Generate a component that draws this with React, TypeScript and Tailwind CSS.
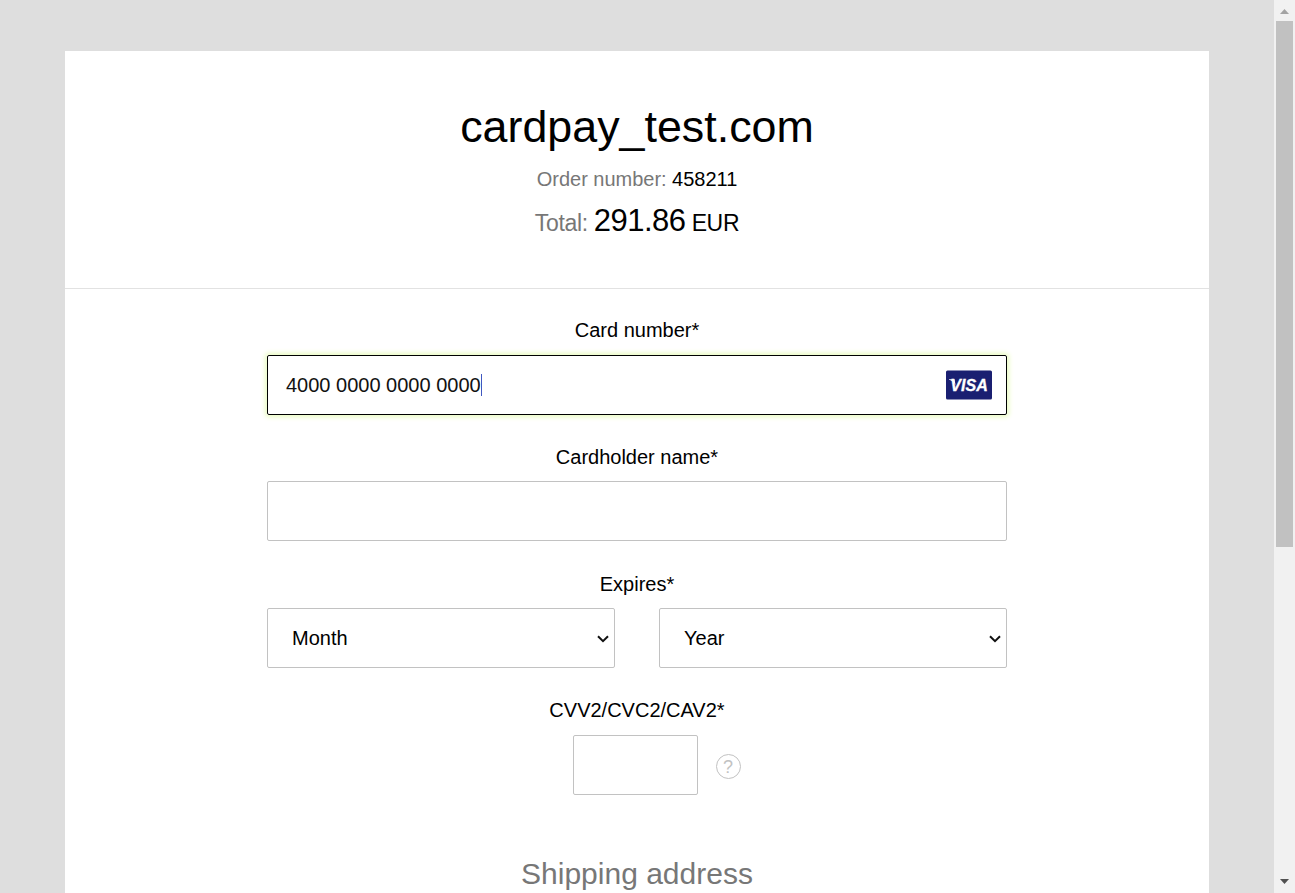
import React from "react";

const label = "flex h-6 items-center justify-center text-[20px] leading-6";
const box = "h-[60px] rounded-[2px] border border-[#c2c2c2] bg-white";

function Chevron() {
  return (
    <svg className="mt-px" width="12" height="8" viewBox="0 0 12 8" fill="none" stroke="#111" strokeWidth="2">
      <path d="M1 1.200 6 6.200 11 1.200" />
    </svg>
  );
}

function Select({ text }: { text: string }) {
  return (
    <div className={`${box} flex w-[348px] items-center justify-between pr-[5px] pl-6 text-[20px]`}>
      <span>{text}</span>
      <Chevron />
    </div>
  );
}

function Visa() {
  return (
    <svg width="46" height="30" viewBox="0 0 46 30">
      <rect y="0.5" width="46" height="29" rx="1.5" fill="#1a1f71" />
      <path d="M3 9.300H8.500L9.500 15Q7.500 11 3 9.800Z" fill="#fff" />
      <text x="4.300" y="21" textLength="37.500" lengthAdjust="spacingAndGlyphs" className="fill-white stroke-white stroke-[0.3] text-[16.500px] font-bold italic">VISA</text>
    </svg>
  );
}

function HelpIcon() {
  return (
    <div className="mt-[3px] flex size-[25px] items-center justify-center rounded-full border border-[#c2c2c2] text-[18px] leading-none text-[#c2c2c2]"><span className="-ml-px">?</span></div>
  );
}

export default function App() {
  return (
    <div className="flex h-[893px] w-[1295px] overflow-hidden bg-[#dedede] font-['Liberation_Sans',Arial,sans-serif] text-black">
      <main className="mt-[51px] ml-[65px] h-[842px] w-[1144px] shrink-0 overflow-hidden bg-white">
        <header className="h-[238px] border-b border-[#e2e2e2] pt-[49px] text-center">
          <h1 className="text-[44.800px] leading-[52px]">cardpay_test.com</h1>
          <p className="mt-[15px] text-[20px] leading-6 tracking-[-0.02px]"><span className="text-[#777]">Order number:</span> 458211</p>
          <p className="mt-[12px] text-[23px] leading-9 tracking-[-0.35px]"><span className="text-[#777]">Total:</span> <span className="text-[31px] tracking-[-0.5px]">291.86</span> EUR</p>
        </header>
        <form className="mx-auto w-[740px] pt-[29px]">
          <div className={label}>Card number*</div>
          <div className="mt-[13px] flex h-[60px] items-center justify-between rounded-[2px] border border-black pr-[14px] pl-[18px] text-[20px] shadow-[0_0_5px_2px_#e9fbc0]">
            <span className="flex items-center text-[#111]">4000 0000 0000 0000<i className="h-[22px] w-px bg-[#4058c0]" /></span>
            <Visa />
          </div>
          <div className={`${label} mt-[30px]`}>Cardholder name*</div>
          <div className={`${box} mt-[12px]`} />
          <div className={`${label} mt-[31px]`}>Expires*</div>
          <div className="mt-[12px] flex justify-between">
            <Select text="Month" />
            <Select text="Year" />
          </div>
          <div className={`${label} mt-[30px]`}>CVV2/CVC2/CAV2*</div>
          <div className="mt-[13px] ml-[306px] flex items-center gap-[18px]">
            <div className={`${box} w-[125px]`} />
            <HelpIcon />
          </div>
          <h2 className="mt-[61px] text-center text-[30px] leading-9 text-[#777]">Shipping address</h2>
        </form>
      </main>
      <aside className="ml-auto flex w-[21px] flex-col items-center bg-[#f1f1f1]">
        <svg width="21" height="21"><path d="M6 14h9l-4.500-5z" fill="#a3a3a3" /></svg>
        <div className="h-[526px] w-[17px] bg-[#c1c1c1]" />
        <svg className="mt-auto" width="21" height="21"><path d="M6 7h9l-4.500 5z" fill="#505050" /></svg>
      </aside>
    </div>
  );
}
